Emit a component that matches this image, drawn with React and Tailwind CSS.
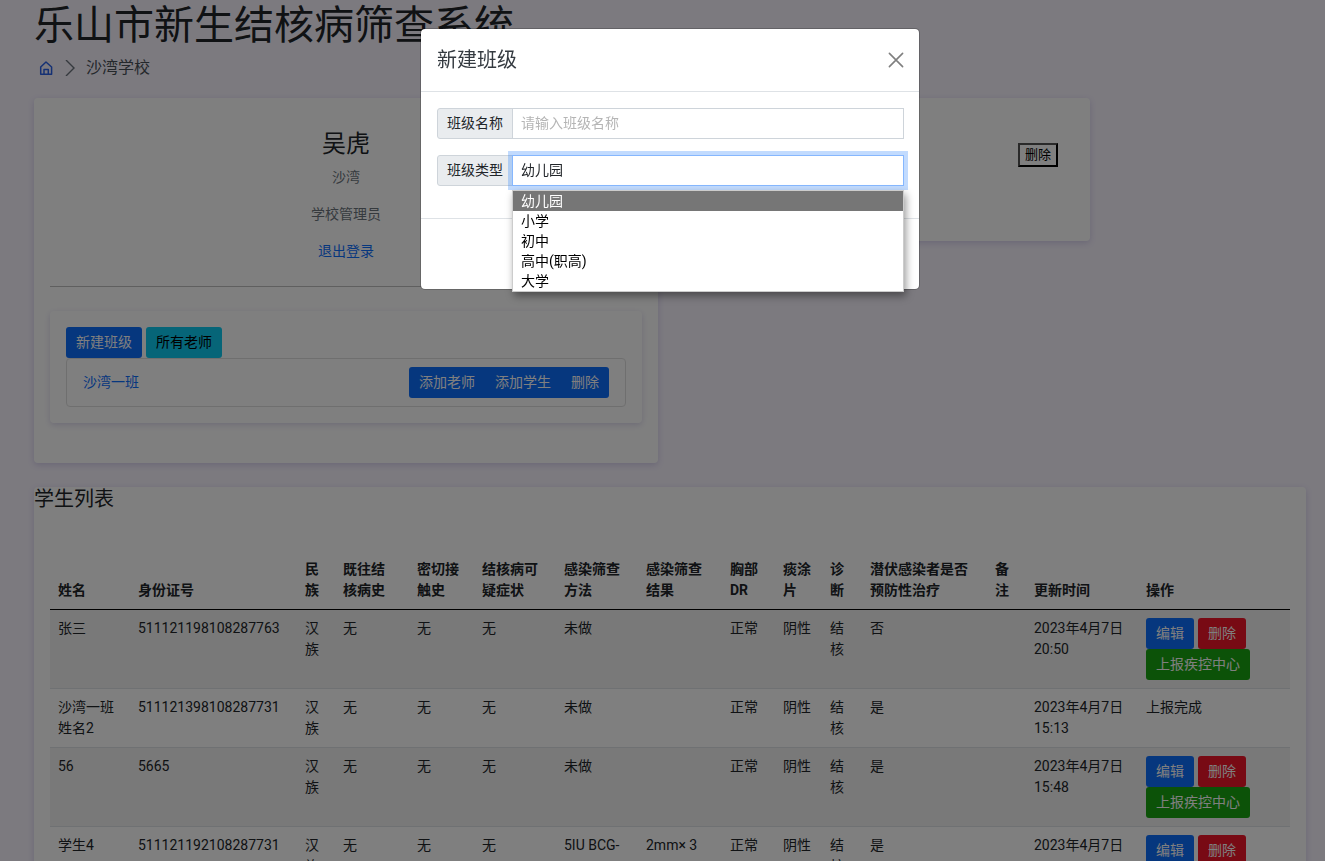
import { useState } from 'react';

const columns = [
  { label: '姓名', width: 'w-[80px]' },
  { label: '身份证号', width: 'w-[167px]' },
  { label: '民族', width: 'w-[38px]' },
  { label: '既往结\n核病史', width: 'w-[74px]' },
  { label: '密切接触史', width: 'w-[65px]' },
  { label: '结核病可疑症状', width: 'w-[82px]' },
  { label: '感染筛查方法', width: 'w-[82px]' },
  { label: '感染筛查结果', width: 'w-[84px]' },
  { label: '胸部 DR', width: 'w-[53px]' },
  { label: '痰涂片', width: 'w-[47px]' },
  { label: '诊断', width: 'w-[40px]' },
  { label: '潜伏感染者是否预防性治疗', width: 'w-[125px]' },
  { label: '备注', width: 'w-[39px]' },
  { label: '更新时间', width: 'w-[112px]' },
  { label: '操作', width: 'w-[152px]' },
];

const students = [
  { cells: ['张三', '511121198108287763', '汉族', '无', '无', '无', '未做', '', '正常', '阴性', '结核', '否', '', '2023年4月7日 20:50'], done: false },
  { cells: ['沙湾一班姓名2', '511121398108287731', '汉族', '无', '无', '无', '未做', '', '正常', '阴性', '结核', '是', '', '2023年4月7日 15:13'], done: true },
  { cells: ['56', '5665', '汉族', '无', '无', '无', '未做', '', '正常', '阴性', '结核', '是', '', '2023年4月7日 15:48'], done: false },
  { cells: ['学生4', '511121192108287731', '汉族', '无', '无', '无', '5IU BCG-', '2mm× 3', '正常', '阴性', '结核', '是', '', '2023年4月7日'], done: false },
];

const classTypes = ['幼儿园', '小学', '初中', '高中(职高)', '大学'];

const btn = 'h-[31px] rounded-[3px] px-[10px] pb-0.5 text-sm';
const card = 'rounded bg-white shadow-[0_2px_6px_rgba(80,60,160,0.2)]';
const fieldLabel = 'flex w-[76px] items-center justify-center rounded-l-[3px] border border-[#ced4da] bg-[#e9ecef] pb-0.5 text-sm';

function StudentTable() {
  return (
    <table className="w-full table-fixed border-collapse text-left text-sm leading-[21px]">
      <colgroup>
        {columns.map(c => <col key={c.label} className={c.width} />)}
      </colgroup>
      <thead>
        <tr className="border-b border-black">
          {columns.map(c => (
            <th key={c.label} scope="col" className="whitespace-pre-line p-2 align-bottom font-bold">{c.label}</th>
          ))}
        </tr>
      </thead>
      <tbody>
        {students.map(s => (
          <tr key={s.cells[1]} className="border-b border-[#dee2e6] odd:bg-[#f2f2f2]">
            {s.cells.map((text, i) => <td key={i} className="p-2 align-top">{text}</td>)}
            <td className="p-2 align-top">
              {s.done ? '上报完成' : (
                <div className="flex flex-wrap gap-x-1">
                  <button className={`${btn} bg-[#0d6efd] text-white`}>编辑</button>
                  <button className={`${btn} bg-[#f01428] text-white`}>删除</button>
                  <button className={`${btn} bg-[#18a410] text-white`}>上报疾控中心</button>
                </div>
              )}
            </td>
          </tr>
        ))}
      </tbody>
    </table>
  );
}

function ClassModal() {
  const [name, setName] = useState('');
  const [type, setType] = useState('幼儿园');

  return (
    <div className="fixed inset-0 bg-black/50 pl-[15px] pt-7">
      <div role="dialog" aria-labelledby="modal-title" className="mx-auto max-w-[500px] rounded-[5px] border border-black/20 bg-white bg-clip-padding">
        <div className="flex items-center justify-between border-b border-[#dee2e6] py-4 pl-4 pr-[15px]">
          <h5 id="modal-title" className="text-xl leading-[30px] text-[#343a40]">新建班级</h5>
          <button aria-label="关闭" className="text-[#7f7f7f]">
            <svg className="size-4" viewBox="0 0 16 16" fill="none" stroke="currentColor" strokeWidth="1.6" strokeLinecap="round">
              <path d="M1.4 1.4 14.6 14.6M14.6 1.4 1.4 14.6" />
            </svg>
          </button>
        </div>

        <div className="flex flex-col gap-4 pb-8 pl-4 pr-[15px] pt-4">
          <div className="flex h-[31px]">
            <label htmlFor="class-name" className={fieldLabel}>班级名称</label>
            <input id="class-name" value={name} onChange={e => setName(e.target.value)} placeholder="请输入班级名称" className="-ml-px min-w-0 flex-1 border border-[#ced4da] px-2 pb-0.5 text-sm outline-none placeholder:text-[#b5b5b5]" />
          </div>
          <div className="relative flex h-[31px]">
            <label htmlFor="class-type" className={fieldLabel}>班级类型</label>
            <select id="class-type" value={type} onChange={e => setType(e.target.value)} className="relative -ml-px min-w-0 flex-1 appearance-none border border-[#86b7fe] bg-white px-2 pb-0.5 text-sm shadow-[0_0_0_4px_rgba(13,110,253,0.25)] outline-none">
              {classTypes.map(t => <option key={t}>{t}</option>)}
            </select>
            <ul className="absolute left-[75px] right-0 top-[35px] z-10 border border-[#ccc] bg-white text-sm leading-5 shadow-[2px_4px_8px_rgba(0,0,0,0.4)]">
              {classTypes.map(t => (
                <li key={t} className={`px-2 ${t === type ? 'bg-[#767676] text-white' : 'text-black'}`}>{t}</li>
              ))}
            </ul>
          </div>
        </div>

        <div className="min-h-[71px] border-t border-[#dee2e6]" />
      </div>
    </div>
  );
}

export default function App() {
  return (
    <div className="h-screen overflow-hidden bg-[#f8f4ff] pl-[34px] pr-[19px] font-[Roboto,'Noto_Sans_CJK_SC',sans-serif] text-[#212529]">
      <h1 className="pt-0.5 text-[40px] leading-[48px]">乐山市新生结核病筛查系统</h1>
      <nav className="mb-[18px] mt-1.5 flex h-6 items-center pl-1 text-base">
        <a href="#" aria-label="首页" className="text-[#2b62e8]">
          <svg className="size-4" viewBox="0 0 16 16" fill="none" stroke="currentColor" strokeWidth="1.5" strokeLinejoin="round">
            <path d="M2.7 7 8 2l5.6 5v7.3H2.7zM6 14V9.6h4.3V14" />
          </svg>
        </a>
        <svg className="mx-2 size-4" viewBox="0 0 16 16" fill="none" stroke="#6c757d" strokeWidth="1.4">
          <path d="m4 0 8 8-8 8" />
        </svg>
        <span className="text-[#495057]">沙湾学校</span>
      </nav>

      <div className="grid grid-cols-12 items-start gap-6">
        <section className={`${card} col-span-6 px-4 pb-10 pt-8`}>
          <div className="flex flex-col items-center gap-4 border-b border-[#bfbfbf] pb-6 text-sm leading-[21px] text-[#6c757d]">
            <div className="text-center">
              <h4 className="mb-2 text-2xl leading-[29px] text-[#212529]">吴虎</h4>
              <p>沙湾</p>
            </div>
            <p>学校管理员</p>
            <a href="#" className="text-[#0d6efd]">退出登录</a>
          </div>
          <div className={`${card} mt-6 p-4`}>
            <div className="flex gap-1">
              <button className={`${btn} bg-[#0d6efd] text-white`}>新建班级</button>
              <button className={`${btn} bg-[#0dcaf0] text-black`}>所有老师</button>
            </div>
            <ul className="rounded border border-[#dfdfdf]">
              <li className="flex items-center justify-between px-4 py-2">
                <a href="#" className="pb-0.5 text-sm text-[#0d6efd]">沙湾一班</a>
                <div className="flex overflow-hidden rounded-[3px] bg-[#0d6efd] text-white">
                  <button className={btn}>添加老师</button>
                  <button className={btn}>添加学生</button>
                  <button className={btn}>删除</button>
                </div>
              </li>
            </ul>
          </div>
        </section>

        <section className={`${card} col-span-4 flex min-h-[143px] items-start justify-end px-8 pt-[45px]`}>
          <button className="border-2 border-b-black border-l-[#555] border-r-black border-t-[#555] px-[5px] text-[13px] leading-5 text-black">删除</button>
        </section>

        <section className={`${card} col-span-12`}>
          <h5 className="text-xl leading-6">学生列表</h5>
          <div className="px-4 pt-10">
            <StudentTable />
          </div>
        </section>
      </div>

      <ClassModal />
    </div>
  );
}
